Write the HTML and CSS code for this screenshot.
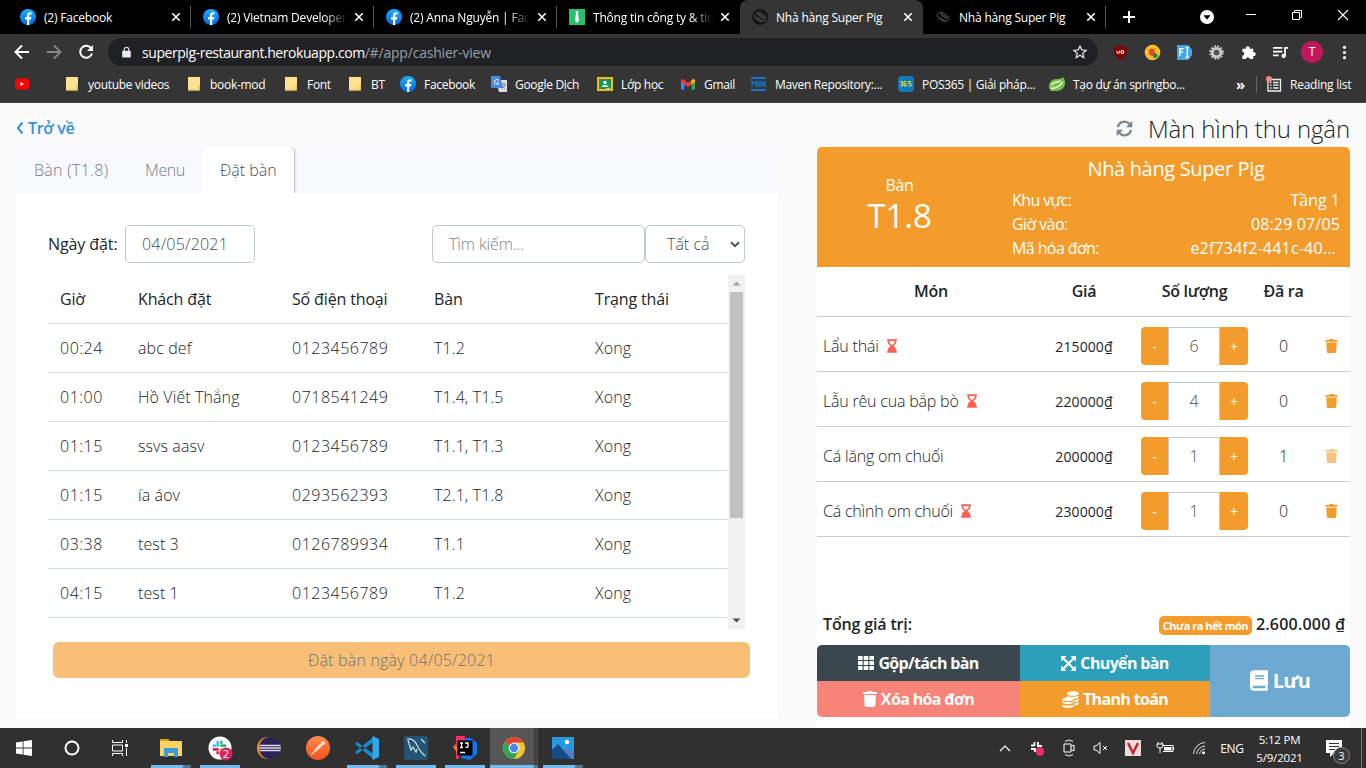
FILE: index.html
```html
<!DOCTYPE html>
<html lang="vi">
<head>
<meta charset="utf-8">
<title>Nhà hàng Super Pig</title>
<link rel="stylesheet" href="styles.css">
</head>
<body>
<svg class="defs" aria-hidden="true">
  <defs>
    <linearGradient id="fbg" x1="0" y1="0" x2="0" y2="1"><stop offset="0" stop-color="#19afff"/><stop offset="1" stop-color="#0866ea"/></linearGradient>
    <linearGradient id="pmg" x1="0" y1="0" x2="0" y2="1"><stop offset="0" stop-color="#ff8a4c"/><stop offset="1" stop-color="#f4511e"/></linearGradient>
    <symbol id="facebook" viewBox="0 0 16 16"><circle cx="8" cy="8" r="8" fill="url(#fbg)"/><path d="M7 16v-5.600H5V8h2V6.400C7 4.300 8.200 3.300 10 3.300l1.500.1v2h-1.100C9.500 5.400 9.200 5.900 9.200 6.600V8h2.200l-.4 2.400H9.200V16z" fill="#fff"/></symbol>
    <symbol id="close" viewBox="0 0 10 10"><path d="M1.300 1.300l7.400 7.400M8.700 1.300L1.300 8.700" stroke="#fff" stroke-width="1.600" fill="none"/></symbol>
    <symbol id="pig" viewBox="0 0 16 16"><path d="M2 7c0-2 2-3.500 4-2.500L13 9c1.500 1 .5 3-1 3H8L3.500 9.500zM5 4l2-1 7 5M4 8l6 4M6 6l6 4" fill="none" stroke="#555" stroke-width="1"/></symbol>
    <symbol id="folder" viewBox="0 0 16 16"><path d="M2 1h12v13.500H2z" fill="#fde293"/><path d="M12.500 9.500H14v5h-1.500zM2 13.500h12v1H2z" fill="#e3b94f"/></symbol>
    <symbol id="trash" viewBox="0 0 448 512"><path d="M432 32H312l-9.400-18.700A24 24 0 0 0 281.100 0H166.800a23.720 23.720 0 0 0-21.400 13.300L136 32H16A16 16 0 0 0 0 48v32a16 16 0 0 0 16 16h416a16 16 0 0 0 16-16V48a16 16 0 0 0-16-16zM53.200 467a48 48 0 0 0 47.900 45h245.800a48 48 0 0 0 47.900-45L416 128H32z" fill="currentColor"/></symbol>
    <symbol id="hourglass" viewBox="0 0 384 512"><path d="M360 64c13.255 0 24-10.745 24-24V24c0-13.255-10.745-24-24-24H24C10.745 0 0 10.745 0 24v16c0 13.255 10.745 24 24 24 0 90.965 51.016 167.734 120.842 192C75.016 280.266 24 357.035 24 448c-13.255 0-24 10.745-24 24v16c0 13.255 10.745 24 24 24h336c13.255 0 24-10.745 24-24v-16c0-13.255-10.745-24-24-24 0-90.965-51.016-167.734-120.842-192C308.984 231.734 360 154.965 360 64zM192 208c-57.787 0-104-66.518-104-144h208c0 77.945-46.510 144-104 144z" fill="currentColor"/></symbol>
    <symbol id="slack" viewBox="0 0 16 16"><g fill="none" stroke-width="2.800" stroke-linecap="round"><path d="M6 2v4M2 6h1" stroke="#36c5f0"/><path d="M10 6h4M10 2v1" stroke="#2eb67d"/><path d="M10 10v4M14 10h-1" stroke="#ecb22e"/><path d="M2 10h4M6 14v-1" stroke="#e01e5a"/></g></symbol>
  </defs>
</svg>

<header class="browser">
  <div class="tabs">
    <div class="tab"><svg class="fav"><use href="#facebook"/></svg><span class="tab-title">(2) Facebook</span><svg class="x"><use href="#close"/></svg></div>
    <div class="tab"><svg class="fav"><use href="#facebook"/></svg><span class="tab-title fade">(2) Vietnam Developers</span><svg class="x"><use href="#close"/></svg></div>
    <div class="tab"><svg class="fav"><use href="#facebook"/></svg><span class="tab-title fade">(2) Anna Nguyễn | Facebook</span><svg class="x"><use href="#close"/></svg></div>
    <div class="tab plain"><svg class="fav" viewBox="0 0 16 16"><path d="M0 0h16v16H0z" fill="#25c16f"/><path d="M6.500 2h3L9 4.500l1 7L8 14l-2-2.500 1-7z" fill="#fff"/></svg><span class="tab-title fade">Thông tin công ty &amp; tin tuyển</span><svg class="x"><use href="#close"/></svg></div>
    <div class="tab active plain"><svg class="fav dark"><use href="#pig"/></svg><span class="tab-title">Nhà hàng Super Pig</span><svg class="x"><use href="#close"/></svg></div>
    <div class="tab"><svg class="fav"><use href="#pig"/></svg><span class="tab-title">Nhà hàng Super Pig</span><svg class="x"><use href="#close"/></svg></div>
    <svg class="new-tab" viewBox="0 0 12 12"><path d="M6 0v12M0 6h12" stroke="#fff" stroke-width="2"/></svg>
    <div class="window-buttons">
      <svg width="14" height="14" viewBox="0 0 14 14"><circle cx="7" cy="7" r="7" fill="#fff"/><path d="M3.500 5.200h7L7 9.800z" fill="#000"/></svg>
      <svg width="10" height="10" viewBox="0 0 10 10"><path d="M0 4.500h10" stroke="#fff"/></svg>
      <svg width="10" height="10" viewBox="0 0 10 10"><path d="M.5 2.500h7v7h-7zM2.500 2.500v-2h7v7h-2" fill="none" stroke="#fff"/></svg>
      <svg width="10" height="10" viewBox="0 0 10 10"><path d="M0 0l10 10M10 0L0 10" stroke="#fff" stroke-width="1.100"/></svg>
    </div>
  </div>

  <div class="toolbar">
    <svg width="16" height="16" viewBox="0 0 16 16"><path d="M15 8H2M8 1.500L1.500 8 8 14.500" fill="none" stroke="#fff" stroke-width="2"/></svg>
    <svg width="16" height="16" viewBox="0 0 16 16"><path d="M1 8h13M8 1.500L14.500 8 8 14.500" fill="none" stroke="#888" stroke-width="1.800"/></svg>
    <svg width="16" height="16" viewBox="0 0 16 16"><path d="M13.300 4.500A6 6 0 1 0 14 9.500" fill="none" stroke="#fff" stroke-width="2"/><path d="M15 1v6H9z" fill="#fff"/></svg>
    <div class="address">
      <svg width="9" height="12" viewBox="0 0 10 12"><path d="M1 4.500h8q.8 0 .8.800V11q0 1-.8 1H1q-.8 0-.8-1V5.300q0-.8.800-.8z" fill="#e8eaed"/><path d="M2.500 5V3.200a2.500 2.500 0 0 1 5 0V5" fill="none" stroke="#e8eaed" stroke-width="1.300"/></svg>
      <span class="url">superpig-restaurant.herokuapp.com<span class="path">/#/app/cashier-view</span></span>
      <svg width="14" height="14" viewBox="0 0 14 14"><path d="M7 1l1.800 4 4.300.4-3.300 2.900 1 4.300L7 10.300l-3.800 2.300 1-4.300L.9 5.400 5.200 5z" fill="none" stroke="#ddd" stroke-width="1.300"/></svg>
    </div>
    <div class="extensions">
      <svg viewBox="0 0 16 16"><path d="M8 .5c2 1.300 4 2 7 2 0 6-.5 10-7 13C1.500 12.500 1 8.500 1 2.500c3 0 5-.7 7-2z" fill="#800000"/><path d="M4.300 6v1.500q0 1.300 1.300 1.300T7 7.500V6" stroke="#fff" fill="none" stroke-width="1.100"/><circle cx="10" cy="7.400" r="1.500" stroke="#fff" fill="none" stroke-width="1.100"/></svg>
      <svg viewBox="0 0 16 16"><circle cx="8" cy="8" r="8.300" fill="#fbc12d"/><path d="M4 5.500l8 4.500M4.500 10.500l6.500-7" stroke="#7d4b20"/><ellipse cx="7.500" cy="7.500" rx="3" ry="4" fill="#dd4b2c" transform="rotate(-20 8 8)"/><circle cx="11" cy="11.500" r="2.600" fill="#208b55"/></svg>
      <svg viewBox="0 0 16 16"><path d="M0 0h12l4 5v6l-4 5H0z" fill="#45a4e5"/><path d="M3 12V4h4M3 7.500h3.500M9 2.500q2 0 2 1.500v8q0 1.500-2 1.500M13 2.500q-2 0-2 1.500v8q0 1.500 2 1.500" stroke="#fff" stroke-width="1.400" fill="none"/></svg>
      <svg viewBox="0 0 16 16"><circle cx="8" cy="8" r="4.500" fill="none" stroke="#ccc" stroke-width="3"/><circle cx="8" cy="8" r="6.700" fill="none" stroke="#ccc" stroke-width="2" stroke-dasharray="2 1.510"/><circle cx="8" cy="8" r="2.500" fill="#555"/></svg>
      <svg viewBox="0 0 16 16"><path d="M1.500 4h3.700a2.100 2.100 0 1 1 4 0H13v3.700a2.100 2.100 0 1 1 0 4V15H9.300a2 2 0 0 0-4 0H1.500v-3.700a2 2 0 0 0 0-4z" fill="#fff"/></svg>
      <svg viewBox="0 0 16 16"><path d="M0 3h10M0 7h10M0 11h6" stroke="#fff" stroke-width="1.800"/><path d="M12.800 12V3H16" fill="none" stroke="#fff" stroke-width="1.800"/><circle cx="11.300" cy="11.700" r="2.300" fill="#fff"/></svg>
      <span class="avatar">T</span>
      <svg viewBox="0 0 16 16"><g fill="#fff"><circle cx="8" cy="2.500" r="1.700"/><circle cx="8" cy="8" r="1.700"/><circle cx="8" cy="13.500" r="1.700"/></g></svg>
    </div>
  </div>

  <nav class="bookmarks">
    <a><svg viewBox="0 0 16 16"><rect x="1" y="2.500" width="14" height="11" rx="2" fill="#f00"/><path d="M6.500 6v4L10 8z" fill="#fff"/></svg></a>
    <a><svg><use href="#folder"/></svg>youtube videos</a>
    <a><svg><use href="#folder"/></svg>book-mod</a>
    <a><svg><use href="#folder"/></svg>Font</a>
    <a><svg><use href="#folder"/></svg>BT</a>
    <a><svg><use href="#facebook"/></svg>Facebook</a>
    <a><svg viewBox="0 0 16 16"><path d="M5 4h11v12H8z" fill="#ddd"/><path d="M0 0h9l3 12H1q-1 0-1-1z" fill="#4b86ea"/><path d="M7.800 4.500A2.400 2.400 0 1 0 8 7H5.800" fill="none" stroke="#fff"/><path d="M10 8h5M12.500 7v1M14 8q-.5 3-3 4.500M11 9.500q1.500 2.500 3 3" fill="none" stroke="#68758a" stroke-width=".8"/></svg>Google Dịch</a>
    <a><svg viewBox="0 0 16 16"><path d="M0 1h16v14H0z" fill="#f5ba15"/><path d="M2 3h12v10H2z" fill="#17945b"/><circle cx="8" cy="6.500" r="1.700" fill="#fff"/><path d="M4.500 11q0-2 3.500-2t3.500 2z" fill="#d4eee1"/><path d="M9.500 12.300H13V13H9.500z" fill="#fff"/></svg>Lớp học</a>
    <a><svg viewBox="0 0 16 16"><path d="M1 3.500V13.500h3.500V7z" fill="#4285f4"/><path d="M15 3.500V13.500h-3.500V7z" fill="#34a853"/><path d="M1 4l2-1 5 4 5-4 2 1v1.800L8 11 1 5.800z" fill="#ea4335"/><path d="M11.500 4.200L13 3l2 1v2l-3.500 2.600z" fill="#fbbc04"/></svg>Gmail</a>
    <a><svg viewBox="0 0 16 16"><path d="M0 2h15M0 14h15" stroke="#1675d1" stroke-width="2"/><path d="M1 11V5l2 3 2-3v6M7 5v6M9 5v6M7 8h2M11 11V5l3 6V5" fill="none" stroke="#1675d1" stroke-width="1.200"/></svg>Maven Repository:...</a>
    <a><svg viewBox="0 0 16 16"><rect width="16" height="16" rx="4" fill="#1578bc"/><path d="M2 5.500h2.500v2.300H3 4.500V10H2M8.300 5.500H6V10h2.300V8H6M13 5.500h-2.500v2H13V10h-2.500" fill="none" stroke="#d6dc55"/></svg>POS365 | Giải pháp...</a>
    <a><svg viewBox="0 0 16 16"><path d="M14 1C15 2 16 4 16 7c0 5-4 8-9 8H2l-2-3c-.500-6 3-9 8-9 3 0 5-.5 6-2z" fill="#77c043"/><path d="M2 12.500C7 12 11 11 13.500 6" fill="none" stroke="#fff" stroke-width="1.500"/><path d="M2.500 9C4 6.500 8 6 11.500 5" fill="none" stroke="#e9f6df" stroke-width="1.500"/></svg>Tạo dự án springbo...</a>
    <a><b class="more">»</b></a>
    <a class="reading"><svg viewBox="0 0 16 16"><path d="M2 3.500h12.500v11.500H2zM4 6.500h1.500M7 6.500h5.500M4 9.200h1.500M7 9.200h5.500M4 12h1.500M7 12h5.500" fill="none" stroke="#eee" stroke-width="1.300"/><circle cx="3" cy="3" r="3" fill="#f28b82"/></svg>Reading list</a>
  </nav>
</header>

<main class="app">
  <section class="left">
    <a class="back"><svg width="8" height="12" viewBox="0 0 8 12"><path d="M6.500 .5L2 6l4.500 5.500" fill="none" stroke="#3490dc" stroke-width="2"/></svg><span>Trở về</span></a>
    <div class="panel">
      <div class="panel-tabs"><span class="ptab pt-a">Bàn (T1.8)</span><span class="ptab pt-b">Menu</span><span class="ptab current">Đặt bàn</span></div>
      <div class="filters">
        <label>Ngày đặt:</label><div class="field date">04/05/2021</div>
        <div class="field search">Tìm kiếm...</div>
        <div class="field select"><span>Tất cả</span><svg width="10" height="7" viewBox="0 0 10 7"><path d="M1 1.200l4 4 4-4" fill="none" stroke="#495057" stroke-width="2"/></svg></div>
      </div>
      <div class="table-box">
        <div class="booking">
          <div class="brow head"><span>Giờ</span><span>Khách đặt</span><span>Số điện thoại</span><span>Bàn</span><span>Trạng thái</span></div>
          <div class="brow"><span class="num">00:24</span><span>abc def</span><span class="num">0123456789</span><span>T1.2</span><span>Xong</span></div>
          <div class="brow"><span class="num">01:00</span><span>Hồ Viết Thắng</span><span class="num">0718541249</span><span>T1.4, T1.5</span><span>Xong</span></div>
          <div class="brow"><span class="num">01:15</span><span>ssvs aasv</span><span class="num">0123456789</span><span>T1.1, T1.3</span><span>Xong</span></div>
          <div class="brow"><span class="num">01:15</span><span>ía áov</span><span class="num">0293562393</span><span>T2.1, T1.8</span><span>Xong</span></div>
          <div class="brow"><span class="num">03:38</span><span>test 3</span><span class="num">0126789934</span><span>T1.1</span><span>Xong</span></div>
          <div class="brow"><span class="num">04:15</span><span>test 1</span><span class="num">0123456789</span><span>T1.2</span><span>Xong</span></div>
        </div>
        <div class="scrollbar">
          <svg width="17" height="17" viewBox="0 0 17 17"><path d="M4.500 10.500h8l-4-4z" fill="#a3a3a3"/></svg>
          <div class="thumb"></div>
          <svg width="17" height="17" viewBox="0 0 17 17"><path d="M4.500 6.500h8l-4 4z" fill="#505050"/></svg>
        </div>
      </div>
      <div class="book-button">Đặt bàn ngày 04/05/2021</div>
    </div>
  </section>

  <section class="right">
    <h1><svg width="17" height="17" viewBox="0 0 17 17"><path d="M2 7a6.600 6.600 0 0 1 11.500-3M15 10A6.600 6.600 0 0 1 3.500 13" fill="none" stroke="#7b8791" stroke-width="2.400"/><path d="M16.300.8v6.400H10zM.7 16.200V9.800H7z" fill="#7b8791"/></svg><span>Màn hình thu ngân</span></h1>
    <div class="bill">
      <div class="bill-head">
        <div class="desk"><span class="desk-label">Bàn</span><span class="desk-no">T1.8</span></div>
        <div class="info">
          <h2>Nhà hàng Super Pig</h2>
          <p><span class="key">Khu vực:</span><span>Tầng 1</span></p>
          <p><span class="key">Giờ vào:</span><span class="when">08:29 07/05</span></p>
          <p><span class="key">Mã hóa đơn:</span><span class="code">e2f734f2-441c-40...</span></p>
        </div>
      </div>
      <div class="irow ihead"><span>Món</span><span>Giá</span><span>Số lượng</span><span>Đã ra</span><span></span></div>
      <div class="irow"><span class="dish">Lẩu thái<svg><use href="#hourglass"/></svg></span><span class="price">215000₫</span><div class="stepper"><b>-</b><i>6</i><b>+</b></div><span>0</span><svg class="bin"><use href="#trash"/></svg></div>
      <div class="irow"><span class="dish">Lẫu rêu cua bắp bò<svg><use href="#hourglass"/></svg></span><span class="price">220000₫</span><div class="stepper"><b>-</b><i>4</i><b>+</b></div><span>0</span><svg class="bin"><use href="#trash"/></svg></div>
      <div class="irow"><span class="dish">Cá lăng om chuối</span><span class="price">200000₫</span><div class="stepper"><b>-</b><i>1</i><b>+</b></div><span>1</span><svg class="bin off"><use href="#trash"/></svg></div>
      <div class="irow"><span class="dish">Cá chình om chuối<svg><use href="#hourglass"/></svg></span><span class="price">230000₫</span><div class="stepper"><b>-</b><i>1</i><b>+</b></div><span>0</span><svg class="bin"><use href="#trash"/></svg></div>
      <div class="total"><span class="total-label">Tổng giá trị:</span><span class="badge">Chưa ra hết món</span><span class="sum">2.600.000 ₫</span></div>
      <div class="actions">
        <div class="act merge"><svg width="16" height="14" viewBox="0 0 16 14"><path d="M0 0h4.600v4H0zM5.700 0h4.600v4H5.700zM11.400 0H16v4h-4.600zM0 5h4.600v4H0zM5.700 5h4.600v4H5.700zM11.400 5H16v4h-4.600zM0 10h4.600v4H0zM5.700 10h4.600v4H5.700zM11.400 10H16v4h-4.600z" fill="#fff"/></svg>Gộp/tách bàn</div>
        <div class="act move"><svg width="15" height="15" viewBox="0 0 15 15"><path d="M2.500 2.500l10 10M12.500 2.500l-10 10" stroke="#fff" stroke-width="2.200"/><path d="M0 0h5.500L0 5.500zM15 0v5.500L9.500 0zM0 15V9.500L5.500 15zM15 15H9.500L15 9.500z" fill="#fff"/></svg>Chuyển bàn</div>
        <div class="act save"><svg width="18" height="21" viewBox="0 0 448 512"><path d="M448 360V24c0-13.300-10.700-24-24-24H96C43 0 0 43 0 96v320c0 53 43 96 96 96h328c13.300 0 24-10.700 24-24v-16c0-7.500-3.500-14.300-8.900-18.700-4.200-15.400-4.200-59.300 0-74.700 5.400-4.300 8.900-11.100 8.900-18.600zM128 134c0-3.300 2.700-6 6-6h212c3.300 0 6 2.700 6 6v20c0 3.300-2.700 6-6 6H134c-3.300 0-6-2.700-6-6v-20zm0 64c0-3.300 2.700-6 6-6h212c3.300 0 6 2.700 6 6v20c0 3.300-2.700 6-6 6H134c-3.300 0-6-2.700-6-6v-20zm253.400 250H96c-17.700 0-32-14.300-32-32 0-17.600 14.400-32 32-32h285.400c-1.900 17.100-1.900 46.900 0 64z" fill="#fff"/></svg>Lưu</div>
        <div class="act remove"><svg width="14" height="16"><use href="#trash"/></svg>Xóa hóa đơn</div>
        <div class="act pay"><svg width="17" height="17" viewBox="0 0 17 17"><g fill="#fff"><ellipse cx="11" cy="2.500" rx="5.700" ry="2.300"/><path d="M5.500 4.500c2 1.700 9 1.700 11.200 0v1.300c0 3-11.200 3-11.200 0zM12.500 9.200c2-.2 3.500-.8 4.200-1.400v1.300c0 1.200-2 2-4.200 2.200zM12.500 12.500c2-.2 3.500-.8 4.200-1.400v1.300c0 1.200-2 2-4.200 2.200z"/></g><path d="M0 7.500q6-3 12 0v8H0z" fill="#f39c2b"/><g fill="#fff"><ellipse cx="6" cy="8.200" rx="5.700" ry="2"/><path d="M.3 10c2 1.600 9.400 1.600 11.400 0v1.300c0 2.300-11.400 2.300-11.400 0zM.3 13.400c2 1.600 9.400 1.600 11.400 0v1.300c0 2.800-11.400 2.800-11.400 0z"/></g></svg>Thanh toán</div>
      </div>
    </div>
  </section>
</main>

<footer class="taskbar">
  <div class="pins">
    <div class="pin"><svg width="16" height="16" viewBox="0 0 16 16"><path d="M0 2.400L6.700 1.400v6.200H0zM7.500 1.300L16 0v7.600H7.500zM0 8.400h6.700v6.200L0 13.600zM7.500 8.400H16V16l-8.500-1.300z" fill="#fff"/></svg></div>
    <div class="pin"><svg width="16" height="16" viewBox="0 0 16 16"><circle cx="8" cy="8" r="6.500" fill="none" stroke="#fff" stroke-width="2"/></svg></div>
    <div class="pin"><svg width="16" height="16" viewBox="0 0 16 16"><path d="M.5 0v2.500h10V0M.5 16v-2.500h10V16M.5 5h10v6H.5zM14.500 0v3M14.500 8v8" fill="none" stroke="#fff"/><path d="M13 4h3v3h-3z" fill="#fff"/></svg></div>
    <div class="pin open multi"><svg width="22" height="20" viewBox="0 0 22 20"><path d="M0 1h8l2 2H0z" fill="#dfa21b"/><path d="M0 3h22v15H0z" fill="#fcd462"/><path d="M4 10h14v9h-4v-4H8v4H4z" fill="#3a9ae0"/></svg></div>
    <div class="pin open"><svg width="24" height="24" viewBox="0 0 24 24"><circle cx="12" cy="12" r="11.500" fill="#fff"/><use href="#slack" x="4" y="4" width="15" height="15"/><circle cx="18" cy="18" r="6.500" fill="#d9225c"/><text x="18" y="22" text-anchor="middle" class="pin-count">2</text></svg></div>
    <div class="pin"><svg width="24" height="24" viewBox="0 0 24 24"><circle cx="11" cy="12" r="11" fill="#f09225"/><circle cx="13" cy="12" r="11" fill="#2c2255"/><path d="M2.500 9.500h21M2 12h22M2.500 14.500h21" stroke="#dcd8ed" stroke-width="1.400"/></svg></div>
    <div class="pin"><svg width="24" height="24" viewBox="0 0 24 24"><circle cx="12" cy="12" r="12" fill="url(#pmg)"/><path d="M5.500 18.500l5-5 5.500-5.500" stroke="#ffe0d2" stroke-width="1.200" fill="none"/><path d="M9.500 14.500l6-6" stroke="#ffe0d2" stroke-width="2.800"/><circle cx="17" cy="7" r="2" fill="#ffe0d2"/></svg></div>
    <div class="pin open multi"><svg width="24" height="24" viewBox="0 0 24 24"><path d="M0 8l2-2L18.500 18v5zM0 16l2 2L18.500 6V1z" fill="#168bd2"/><path d="M17.500 0L24 3v18l-6.500 3z" fill="#32a9ee"/></svg></div>
    <div class="pin open"><svg width="24" height="24" viewBox="0 0 24 24"><rect width="24" height="24" rx="2" fill="#245474"/><path d="M3 3c5-1 9 3 11 8l3 5 4 4M4 4l3 10 2-3 3 5 1-3M17 3l4 4" fill="none" stroke="#d4e2ea" stroke-width="1.200"/></svg></div>
    <div class="pin open"><svg width="24" height="24" viewBox="0 0 24 24"><path d="M3 0h9l-1 12-6 11H3V15L0 11l3-4z" fill="#fb2e66"/><path d="M12 2h6l6 5v11l-7 6-9-2z" fill="#1b72ef"/><path d="M0 10l4 1v6z" fill="#fc8024"/><path d="M4.500 4.500h15v15h-15z"/><path d="M7 7h3M8.500 7v4.500M7 11.500h3M12 7h3v3.500q0 1-2.500 1M7 16.500h5" stroke="#fff" fill="none" stroke-width="1.300"/></svg></div>
    <div class="pin open multi selected"><svg width="22" height="22" viewBox="0 0 22 22"><circle cx="11" cy="11" r="11" fill="#fbc629"/><path d="M11 11L1.500 5.500A11 11 0 0 1 20.500 5.500H11z" fill="#dc4437"/><path d="M1.500 5.500A11 11 0 0 0 11 22l4.800-8.300L11 11z" fill="#30a655"/><circle cx="11" cy="11" r="5.300" fill="#fff"/><circle cx="11" cy="11" r="4.200" fill="#4a86ed"/></svg></div>
    <div class="pin open multi"><svg width="22" height="22" viewBox="0 0 22 22"><path d="M0 0h22v22H0z" fill="#2999df"/><path d="M9 16l7-6 6 6v6H9z" fill="#527cc6"/><path d="M0 13l6-6 13 15H0z" fill="#174b85"/><circle cx="15" cy="5" r="2.200" fill="#fff"/></svg></div>
  </div>
  <div class="tray">
    <svg width="12" height="8" viewBox="0 0 12 8"><path d="M1 7l5-5 5 5" fill="none" stroke="#fff" stroke-width="1.200"/></svg>
    <svg width="16" height="16" viewBox="0 0 16 16"><path d="M5.500 2v4M2 5.500h3M9 2v4h4M2 9h4v3M9 12V9" fill="none" stroke="#fff" stroke-width="1.800"/><circle cx="11" cy="11.500" r="4.200" fill="#f22c73"/></svg>
    <svg width="14" height="18" viewBox="0 0 14 18"><path d="M2 5h7v8H2zM9 7.500l3-1.500v6l-3-1.500M3 2.500q4-3 8 0M3 15.500q4 3 8 0" fill="none" stroke="#fff"/></svg>
    <svg width="16" height="14" viewBox="0 0 16 14"><path d="M1 5h2l4-3.500v11L3 9H1zM10 5l4 4M14 5l-4 4" fill="none" stroke="#fff"/></svg>
    <svg width="16" height="16" viewBox="0 0 16 16"><path d="M0 0h16v16H0z" fill="#e8dcdc"/><path d="M3 3l5 10 5-10" fill="none" stroke="#c3272b" stroke-width="2.500"/></svg>
    <svg width="18" height="14" viewBox="0 0 18 14"><path d="M5.500 4.500H16v6H6M16.500 6v3" fill="none" stroke="#fff"/><path d="M7 6h7.500v3.500H7z" fill="#fff"/><path d="M1 1v2M5 1v2M0 3h6v2q0 2-3 2T0 5zM3 7v5" fill="none" stroke="#fff"/></svg>
    <svg width="14" height="14" viewBox="0 0 14 14"><g fill="none" stroke="#ddd"><path d="M1.500 13A12 12 0 0 1 13 1.500M4.500 13A9 9 0 0 1 13 5M7.500 13A6 6 0 0 1 13 8"/></g><circle cx="11.500" cy="11.700" r="1.500" fill="#fff"/></svg>
    <span class="lang">ENG</span>
    <div class="clock"><span>5:12 PM</span><span>5/9/2021</span></div>
    <div class="notif"><svg width="27" height="27" viewBox="0 0 27 27"><path d="M1 1h16v13H9l-4 4v-4H1z" fill="#fff"/><path d="M4 4.500h10M4 7.500h10M4 10.500h6" stroke="#333" stroke-width="1.200"/><circle cx="16.500" cy="16.500" r="8" fill="#3b3b3b" stroke="#888"/><text x="16.500" y="20.500" text-anchor="middle" class="notif-count">3</text></svg></div>
  </div>
</footer>
</body>
</html>
```

FILE: styles.css
```css
* { box-sizing: border-box; }
body { margin: 0; width: 1366px; height: 768px; overflow: hidden; display: flex; flex-direction: column; background: #fafafa; font-family: "Open Sans", "Noto Sans", sans-serif; color: #212529; }
svg { display: block; flex: none; overflow: visible; }
.defs { width: 0; height: 0; position: absolute; }

/* browser chrome */
.browser { height: 103px; flex: none; background: #353535; border-bottom: 1px solid #444; color: #fff; font-size: 12px; }
.tabs { height: 34px; background: #000; display: flex; padding-left: 8px; }
.tab { width: 183px; height: 34px; display: flex; align-items: center; padding: 0 9px 0 12px; border-right: 1px solid transparent; border-image: linear-gradient(transparent 20%, #555 20%, #555 80%, transparent 80%) 1; }
.tab.plain { border-image: none; }
.tab.active { background: #353535; border-radius: 8px 8px 0 0; }
.fav { width: 16px; height: 16px; margin-right: 8px; }
.fav.dark { background: #161616; border-radius: 50%; }
.tab-title { flex: 1; white-space: nowrap; overflow: hidden; letter-spacing: -0.2px; margin-right: 7px; }
.tab-title.fade { -webkit-mask-image: linear-gradient(90deg, #000 82%, transparent); mask-image: linear-gradient(90deg, #000 82%, transparent); }
.x { width: 10px; height: 10px; }
.new-tab { width: 12px; height: 12px; margin: 11px 0 0 17px; }
.window-buttons { margin-left: auto; width: 166px; height: 30px; display: grid; grid-template-columns: 28px 46px 46px 46px; align-items: center; justify-items: center; }
.window-buttons svg:first-child { margin-top: 3px; justify-self: start; }
.toolbar { height: 36px; display: flex; align-items: center; padding-left: 14px; gap: 16px; }
.address { width: 990px; height: 28px; border-radius: 14px; background: #202124; display: flex; align-items: center; padding: 0 11px 0 14px; margin-left: -2px; gap: 11px; }
.url { flex: 1; font-size: 14px; letter-spacing: -0.44px; color: #fff; }
.path { color: #9aa0a6; letter-spacing: -0.2px; }
.extensions { display: grid; grid-template-columns: repeat(8, 32px); margin-left: -10px; align-items: center; justify-items: center; }
.extensions svg { width: 15px; height: 15px; }
.avatar { width: 22px; height: 22px; border-radius: 50%; background: #c2185b; text-align: center; line-height: 22px; }
.bookmarks { height: 28px; display: grid; grid-template-columns: 50px 122px 97px 64px 53px 91px 106px 83px 71px 147px 151px 187px 20px 1fr; padding-left: 14px; align-items: center; }
.bookmarks a { display: flex; align-items: center; gap: 8px; white-space: nowrap; letter-spacing: -0.3px; }
.bookmarks svg { width: 16px; height: 16px; }
.bookmarks .reading { border-left: 1px solid #666; padding-left: 9px; letter-spacing: -0.25px; }
.more { font-size: 15px; }

/* cashier page */
.app { height: 625px; flex: none; display: flex; padding: 0 16px; justify-content: space-between; font-size: 16px; font-weight: 300; }
.left { width: 761px; }
.back { height: 44px; display: flex; align-items: center; gap: 4px; color: #3490dc; font-weight: 600; padding-top: 6px; letter-spacing: -0.3px; }
.panel { height: 571px; background: #fff; }
.panel-tabs { height: 46px; background: #f8f9fc; display: flex; color: #737c85; }
.ptab { line-height: 47px; padding-left: 18px; }
.pt-a { width: 111px; letter-spacing: 0.3px; }
.pt-b { width: 75px; letter-spacing: -0.4px; }
.current { width: 92px; background: #fff; color: #495057; border-radius: 5px 5px 0 0; box-shadow: 1px 0 2px #bbb; clip-path: inset(0 -4px 0 0); }
.filters { height: 38px; margin: 32px 32px 12px; display: flex; align-items: center; font-weight: 400; }
.filters label { width: 77px; letter-spacing: -0.1px; }
.field { height: 38px; border: 1px solid #bfc9d1; border-radius: 5px; line-height: 36px; padding-left: 16px; color: #495057; font-weight: 300; }
.date { width: 130px; letter-spacing: 0.2px; }
.search { width: 213px; margin-left: 177px; color: #79818a; letter-spacing: -0.1px; }
.select { width: 100px; display: flex; justify-content: space-between; align-items: center; padding: 0 4px 0 21px; }
.table-box { height: 354px; margin: 0 32px; display: flex; overflow: hidden; }
.booking { width: 680px; }
.brow { height: 49px; border-bottom: 1px solid #d3dde4; display: grid; grid-template-columns: 78px 154px 142px 161px 145px; line-height: 48px; padding-left: 12px; white-space: nowrap; letter-spacing: 0.1px; }
.head { font-weight: 500; letter-spacing: -0.15px; }
.num { letter-spacing: 0.5px; }
.scrollbar { width: 17px; height: 354px; background: #f1f1f1; display: flex; flex-direction: column; }
.thumb { width: 13px; height: 226px; background: #c1c1c1; margin: 0 2px auto; }
.book-button { width: 697px; height: 36px; margin: 13px 0 0 37px; background: #f9bf76; border-radius: 6px; color: #6b7176; text-align: center; line-height: 36px; letter-spacing: 0.2px; }
.right { width: 533px; }
.right h1 { height: 44px; margin: 0; display: flex; justify-content: flex-end; align-items: center; gap: 15px; font-size: 24px; font-weight: 300; padding-top: 7px; letter-spacing: -0.12px; }
.bill { background: #fff; height: 581px; display: flex; flex-direction: column; }
.bill-head { height: 120px; background: #f39c2b; color: #fff; border-radius: 5px 5px 0 0; display: flex; font-weight: 400; }
.desk { width: 165px; display: flex; flex-direction: column; align-items: center; padding-top: 26px; }
.desk-label { line-height: 24px; letter-spacing: -0.4px; }
.desk-no { font-size: 33px; line-height: 38px; }
.info { width: 328px; margin-left: 30px; }
.info h2 { margin: 6px 0 5px; font-size: 20px; line-height: 31px; font-weight: 500; text-align: center; letter-spacing: -0.35px; }
.info p { margin: 0; line-height: 23px; height: 24px; display: flex; justify-content: space-between; }
.key { letter-spacing: -0.6px; }
.when { letter-spacing: 0.15px; }
.code { padding-right: 4px; letter-spacing: 0.2px; }
.irow { height: 55px; border-bottom: 1px solid #ccc; display: grid; grid-template-columns: 228px 78px 143px 35px 49px; padding-top: 4px; align-items: center; text-align: center; white-space: nowrap; }
.irow > span { justify-self: center; }
.ihead { height: 50px; padding-top: 0; padding-bottom: 2px; font-weight: 600; letter-spacing: -0.3px; }
.irow > .dish { justify-self: start; padding-left: 6px; display: flex; align-items: center; gap: 8px; letter-spacing: -0.2px; }
.dish svg { width: 10px; height: 14px; color: #fb6053; }
.price { font-size: 14px; font-weight: 400; letter-spacing: 0.1px; }
.stepper { width: 107px; height: 38px; display: grid; grid-template-columns: 27px 52px 28px; border-radius: 4px; overflow: hidden; margin-left: 18px; line-height: 38px; }
.stepper b { background: #f39c2b; color: #fff; font-size: 14px; line-height: 40px; }
.stepper i { border: 1px solid #bfc9d1; font-style: normal; line-height: 36px; color: #495057; }
.bin { width: 13px; height: 14px; color: #f39c2b; justify-self: end; margin-right: 12px; }
.off { opacity: 0.6; }
.total { margin-top: auto; height: 42px; padding: 0 5px 0 6px; display: flex; align-items: center; font-weight: 600; }
.total-label { flex: 1; letter-spacing: -0.15px; }
.sum { letter-spacing: 0.2px; margin-right: -0.2px; }
.badge { width: 93px; height: 19px; background: #f39c2b; color: #fff; border-radius: 5px; font-size: 11px; letter-spacing: -0.5px; font-weight: 700; line-height: 19px; text-align: center; margin: 2px 4px 0 0; white-space: nowrap; }
.actions { height: 72px; margin-bottom: 11px; display: grid; grid-template-columns: 203px 190px 140px; grid-template-rows: 36px 36px; border-radius: 5px; overflow: hidden; }
.act { display: flex; align-items: center; justify-content: center; gap: 4px; color: #fff; font-weight: 700; letter-spacing: -0.65px; }
.merge { background: #3b474f; }
.move { background: #2c9fbb; }
.save { grid-row: 1 / 3; grid-column: 3; background: #6da9d0; font-size: 20px; gap: 5px; padding-bottom: 2px; }
.remove { background: #f88379; }
.pay { background: #f39c2b; }

/* system taskbar */
.taskbar { height: 40px; background: #303030; display: flex; justify-content: space-between; color: #fff; font-size: 12px; }
.pins { display: grid; grid-template-columns: 48px 48px 51px repeat(9, 49px); }
.pin { display: flex; align-items: center; justify-content: center; }
.pin:nth-child(3) { padding-right: 3px; }
.pin:nth-child(n+4) { padding-right: 1px; }
.pin.open { background: linear-gradient(#76b9ed, #76b9ed) 4px 100% / 40px 3px no-repeat; }
.pin.multi { background: linear-gradient(90deg, #76b9ed 32px, #53758f 32px) 4px 100% / 40px 3px no-repeat; }
.pin.selected { background: linear-gradient(90deg, #76b9ed 44px, #53758f 44px) 0 100% / 48px 3px no-repeat, linear-gradient(90deg, #565656 44px, #3e3e3e 44px, #484848 48px, transparent 48px); }
.pin-count { font-size: 11px; fill: #fff; }
.tray { width: 377px; display: grid; grid-template-columns: 32px 32px 32px 31px 34px 32px 34px 32px 57px 61px; align-items: center; justify-items: center; }
.lang { letter-spacing: -0.3px; }
.clock { line-height: 18px; display: flex; flex-direction: column; align-items: center; font-size: 11.5px; letter-spacing: -0.2px; padding-top: 2px; margin-left: 6px; }
.notif { width: 54px; height: 40px; padding: 11px 0 0 17px; border-right: 1px solid #777; justify-self: end; margin-right: 4px; }
.notif-count { font-size: 11px; fill: #fff; }
```
